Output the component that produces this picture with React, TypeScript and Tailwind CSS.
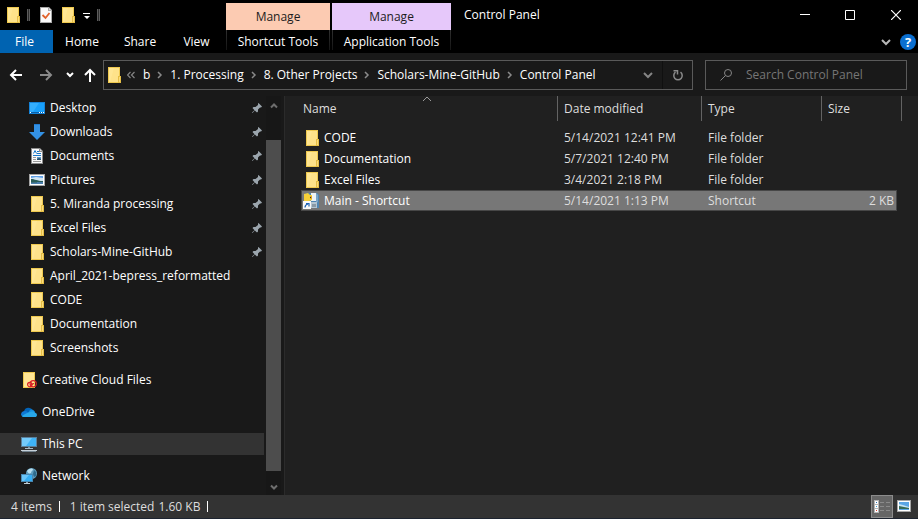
import React from 'react';

type IconProps = { className?: string };

function Folder({ className = '' }: IconProps) {
  return (
    <svg className={`h-4 w-4 shrink-0 ${className}`} viewBox="0 0 16 16" aria-hidden="true">
      <path d="M2 0h12v16H2z" fill="#efc94f" />
      <path d="M3 1h10v14H3z" fill="#ffe694" />
      <path d="M8 1h5v14H4z" fill="#fee28a" />
      <path d="M12 9h3v7h-3z" fill="#e5bd45" />
      <path d="M13 10h1v5h-1z" fill="#fbdc7c" />
    </svg>
  );
}

function Desktop() {
  return (
    <svg className="h-4 w-4 shrink-0" viewBox="0 0 16 16" aria-hidden="true">
      <path d="M0 2h16v12H0z" fill="#1583d8" />
      <path d="M1 3h14v9H1z" fill="#18a0fb" />
      <path d="M1 3h9L4 12H1z" fill="#33aefd" />
      <path d="M1 12h14v1H1z" fill="#0a5fa8" />
      <path d="M1 12h1v1H1zM10 12h1v1h-1zM12 12h1v1h-1zM14 12h1v1h-1z" fill="#fff" />
    </svg>
  );
}

function Downloads() {
  return (
    <svg className="h-4 w-4 shrink-0" viewBox="0 0 16 16" aria-hidden="true">
      <path d="M5 0h6v8h5l-8 8-8-8h5z" fill="#3391e4" />
      <path d="M5 0h6v1H5z" fill="#1f7ad0" />
    </svg>
  );
}

function Documents() {
  return (
    <svg className="h-4 w-4 shrink-0" viewBox="0 0 16 16" aria-hidden="true">
      <path d="M2 0h9l3 3v13H2z" fill="#8c8c8c" />
      <path d="M3 1h7v3h3v11H3z" fill="#fafafa" />
      <path d="M11 1l2 2h-2z" fill="#ddd" />
      <path d="M4.500 5.500l1.500-3 1.500 3" stroke="#1979ca" fill="none" />
      <path d="M8 3h2v1H8zM8 5h4v1H8zM4 7h8v1H4z" fill="#1979ca" />
      <path d="M4 9h3v1H4zM4 11h3v1H4zM4 13h8v1H4z" fill="#9a9a9a" />
      <path d="M8 9h4v3H8z" fill="#5c9bc9" />
      <path d="M8 11l2-1 2 1v1H8z" fill="#28516b" />
    </svg>
  );
}

function Pictures() {
  return (
    <svg className="h-4 w-4 shrink-0" viewBox="0 0 16 16" aria-hidden="true">
      <path d="M0 2h16v12H0z" fill="#a4a4a4" />
      <path d="M1 3h14v10H1z" fill="#fff" />
      <path d="M2 4h12v8H2z" fill="#5f9fe6" />
      <path d="M2 6l5-1 7 1v3H2z" fill="#d3e7f4" />
      <path d="M2 7c4 0 6 2 12 2v1H2z" fill="#2b5e59" />
      <path d="M2 10h12v2H2z" fill="#4b7fae" />
      <path d="M2 10h6v1H2z" fill="#3d6f80" />
    </svg>
  );
}

function CreativeCloud() {
  return (
    <svg className="h-4 w-4 shrink-0" viewBox="0 0 16 16" aria-hidden="true">
      <path d="M2 0h12v16H2z" fill="#efc94f" />
      <path d="M3 1h10v14H3z" fill="#ffe694" />
      <g fill="none" stroke="#da1f26" strokeWidth="1.200">
        <circle cx="8.800" cy="12.600" r="2.200" />
        <circle cx="12.200" cy="11.800" r="3.100" />
        <path d="M9 12.600c2 1.600 2.200-1.600 4-.8" />
      </g>
    </svg>
  );
}

function OneDrive() {
  return (
    <svg className="h-4 w-4 shrink-0" viewBox="0 0 16 16" aria-hidden="true">
      <path d="M3 8c0-5 7-6 9-1l-4 5H3z" fill="#0364b8" />
      <path d="M3 13c-4 0-4-6 1-6 2 0 4 2 7 5z" fill="#0f78d4" />
      <path d="M7 9l2-3c2-1 4 0 5 2z" fill="#1490df" />
      <path d="M1 12c2-2 5-3 8-4 3-1 5 0 5.500 1 2.500 1 1.500 4-.5 4H3c-1 0-1.700-.4-2-1z" fill="#28a8ea" />
    </svg>
  );
}

function ThisPC() {
  return (
    <svg className="h-4 w-4 shrink-0" viewBox="0 0 16 16" aria-hidden="true">
      <path d="M0 1h16v10H0z" fill="#5b7f9a" />
      <path d="M1 2h14v8H1z" fill="#3fb4f7" />
      <path d="M1 2h10L5 10H1z" fill="#74cbfb" />
      <path d="M7 11h2v1H7z" fill="#77909f" />
      <path d="M4 12h8v1H4z" fill="#a9bac6" />
      <path d="M0 14h16v1H0z" fill="#c6d0d8" />
      <path d="M1 15h14v1H1z" fill="#71818d" />
    </svg>
  );
}

function Network() {
  return (
    <svg className="h-4 w-4 shrink-0" viewBox="0 0 16 16" aria-hidden="true">
      <circle cx="10.500" cy="5.500" r="5.500" fill="#5f9dbd" />
      <path d="M6 3c2-3 5-3 6-2 0 2-2 2-2 4-2 1-3 0-4-2z" fill="#b9deee" />
      <path d="M13 2l2 2v4l-2 1-1-3z" fill="#2e6b8c" />
      <path d="M0 6h12v8H0z" fill="#4888b2" />
      <path d="M1 7h10v6H1z" fill="#35adf2" />
      <path d="M1 7h7l-5 6H1z" fill="#69c5f8" />
      <path d="M5 14h2v1H5z" fill="#8ba2b2" />
      <path d="M3 15h6v1H3z" fill="#c2ced6" />
    </svg>
  );
}

function PythonShortcut() {
  return (
    <svg className="h-4 w-4 shrink-0" viewBox="0 0 16 16" aria-hidden="true">
      <path d="M3 0h11l2 2v13H3z" fill="#4f86b3" />
      <path d="M8 0h5v8H8z" fill="#eef3f6" />
      <path d="M13 0l2 2v7l-2 1z" fill="#7ba4c6" />
      <path d="M8 9h6v6H8z" fill="#b4c6d3" />
      <path d="M9 11h4v3H9z" fill="#8a9aa6" />
      <path d="M1 1l4-1 2 2h2v5L6 8H1z" fill="#f6cf38" />
      <path d="M7 3h2v3H7z" fill="#e6a91f" />
      <path d="M7 4h1v1H7z" fill="#333" />
      <path d="M0 8h8v8H0z" fill="#f8f8f8" />
      <path d="M2 14.500c0-2 1-3 3-3.500M3 10.500h3v3" fill="none" stroke="#1c62b5" strokeWidth="1.200" />
    </svg>
  );
}

function Pin() {
  return (
    <svg className="h-3 w-3 shrink-0" viewBox="0 0 12 12" aria-label="Pinned" role="img">
      <path d="M7.500 1L11 4.500l-1 1-1 0L7 7.500 7 9.500l-1 1L3.800 8.500 1.500 11 1 10.500 3.500 8.200 1.500 6l1-1h2l2.500-2V1.500z" fill="#9ba5ad" />
    </svg>
  );
}

function Stroke({ d, className, box = '0 0 14 14' }: { d: string; className: string; box?: string }) {
  return (
    <svg className={`shrink-0 ${className}`} viewBox={box} fill="none" stroke="currentColor" strokeWidth="2" aria-hidden="true">
      <path d={d} />
    </svg>
  );
}

function Separator() {
  return <span className="h-3 w-[3px] border-x border-[#5c5c5c] bg-[#2b2b2b]" />;
}

type Item = { label: string; icon: React.ReactNode; pinned?: boolean; selected?: boolean };

const quickAccess: Item[] = [
  { label: 'Desktop', icon: <Desktop />, pinned: true },
  { label: 'Downloads', icon: <Downloads />, pinned: true },
  { label: 'Documents', icon: <Documents />, pinned: true },
  { label: 'Pictures', icon: <Pictures />, pinned: true },
  { label: '5. Miranda processing', icon: <Folder />, pinned: true },
  { label: 'Excel Files', icon: <Folder />, pinned: true },
  { label: 'Scholars-Mine-GitHub', icon: <Folder />, pinned: true },
  { label: 'April_2021-bepress_reformatted', icon: <Folder /> },
  { label: 'CODE', icon: <Folder /> },
  { label: 'Documentation', icon: <Folder /> },
  { label: 'Screenshots', icon: <Folder /> },
];

const roots: Item[] = [
  { label: 'Creative Cloud Files', icon: <CreativeCloud /> },
  { label: 'OneDrive', icon: <OneDrive /> },
  { label: 'This PC', icon: <ThisPC />, selected: true },
  { label: 'Network', icon: <Network /> },
];

const files = [
  { name: 'CODE', date: '5/14/2021 12:41 PM', type: 'File folder', size: '' },
  { name: 'Documentation', date: '5/7/2021 12:40 PM', type: 'File folder', size: '' },
  { name: 'Excel Files', date: '3/4/2021 2:18 PM', type: 'File folder', size: '' },
  { name: 'Main - Shortcut', date: '5/14/2021 1:13 PM', type: 'Shortcut', size: '2 KB' },
];

const crumbs = ['b', '1. Processing', '8. Other Projects', 'Scholars-Mine-GitHub', 'Control Panel'];

function ContextTab({ group, color, width }: { group: string; color: string; width: string }) {
  return (
    <div className={`mr-0.5 flex shrink-0 flex-col pt-[3px] ${width}`}>
      <div className={`flex h-[27px] items-center justify-center text-[#1c1c1c] ${color}`}>Manage</div>
      <div className="flex h-[23px] items-start justify-between">
        <span className="h-5 w-px bg-linear-to-b from-[#303030] to-[#151515]" />
        <button className="h-full flex-1 whitespace-nowrap">{group}</button>
        <span className="h-5 w-px bg-linear-to-b from-[#303030] to-[#151515]" />
      </div>
    </div>
  );
}

function Header() {
  return (
    <header className="flex bg-black">
      <div className="w-[226px] shrink-0">
        <div className="flex h-[30px] items-center pl-[5px]">
          <Folder />
          <span className="ml-1.5 flex"><Separator /></span>
          <button aria-label="Properties" className="ml-[9px]">
            <svg className="h-4 w-4" viewBox="0 0 16 16">
              <path d="M1 0h9l3 3v13H1z" fill="#a9a9a9" />
              <path d="M2 1h7v3h3v11H2z" fill="#fafafa" />
              <path d="M10 1l2 2h-2z" fill="#ddd" />
              <path d="M3.500 8l3 3 4-5" fill="none" stroke="#e2622b" strokeWidth="1.800" />
            </svg>
          </button>
          <button aria-label="New folder" className="ml-[5px]"><Folder /></button>
          <button aria-label="Customize Quick Access Toolbar" className="ml-[7px] mt-px">
            <svg className="h-2 w-2" viewBox="0 0 8 8">
              <path d="M0 1h7v1H0zM1 4h6L4 7z" fill="#fff" />
            </svg>
          </button>
          <span className="ml-1.5 flex"><Separator /></span>
        </div>
        <nav className="flex h-[23px]">
          <button className="w-[53px] bg-[#0063b1] pr-1">File</button>
          <button className="w-[58px]">Home</button>
          <button className="w-[58px]">Share</button>
          <button className="w-[55px]">View</button>
        </nav>
      </div>
      <ContextTab group="Shortcut Tools" color="bg-[#fccbb2]" width="w-[104px]" />
      <ContextTab group="Application Tools" color="bg-[#e6c8fa]" width="w-[119px]" />
      <div className="min-w-0 flex-1">
        <div className="flex h-[30px] items-center">
          <h1 className="flex-1 pl-[11px]">Control Panel</h1>
          <button aria-label="Minimize" className="flex w-[45px] justify-center">
            <svg className="h-2.5 w-2.5" viewBox="0 0 10 10"><path d="M0 4h10v1H0z" fill="#fff" /></svg>
          </button>
          <button aria-label="Maximize" className="flex w-[46px] justify-center">
            <svg className="h-2.5 w-2.5" viewBox="0 0 10 10"><path d="M.5.5h9v9h-9z" fill="none" stroke="#fff" /></svg>
          </button>
          <button aria-label="Close" className="flex w-[45px] justify-center">
            <svg className="h-2.5 w-2.5" viewBox="0 0 10 10"><path d="M0 0l10 10M10 0L0 10" fill="none" stroke="#fff" strokeWidth="1.200" /></svg>
          </button>
        </div>
        <div className="flex h-[23px] items-center justify-end gap-[9px]">
          <button aria-label="Expand the Ribbon">
            <Stroke className="h-2.5 w-2.5 text-[#b8b8b8]" box="0 0 10 10" d="M1 3l4 4 4-4" />
          </button>
          <button aria-label="Help" className="mr-0.5 flex h-4 w-4 items-center justify-center rounded-full bg-[#0b6fd0] text-[13px] font-bold leading-4">?</button>
        </div>
      </div>
    </header>
  );
}

function AddressBar() {
  return (
    <div className="flex h-[43px] items-center pr-[11px] text-white">
      <div className="flex w-[103px] shrink-0 items-center pl-[9px]">
        <button aria-label="Back"><Stroke className="h-3.5 w-3.5" d="M13 7H2M7 2L2 7l5 5" /></button>
        <button aria-label="Forward" className="ml-[17px] text-[#8a8a8a]"><Stroke className="h-3.5 w-3.5" d="M0 7h11M6 2l5 5-5 5" /></button>
        <button aria-label="Recent locations" className="ml-3"><Stroke className="h-2 w-2" box="0 0 8 8" d="M1 2l3 3 3-3" /></button>
        <button aria-label="Up" className="ml-[9px]"><Stroke className="h-3.5 w-3.5" d="M7 14V2M2 7l5-5 5 5" /></button>
      </div>
      <div className="flex h-[30px] min-w-0 flex-1 items-center border border-[#5a5a5a]">
        <Folder className="ml-0.5" />
        <svg className="ml-[5px] h-2 w-2 shrink-0 text-[#858585]" viewBox="0 0 8 8" fill="none" stroke="currentColor" strokeWidth="1.200" aria-hidden="true">
          <path d="M3.500 1l-3 3 3 3M7.500 1l-3 3 3 3" />
        </svg>
        <ol className="ml-2 flex items-center">
          {crumbs.map((crumb, i) => (
            <li key={crumb} className="flex items-center">
              {i > 0 && (
                <span className="flex w-5 justify-center text-[#8a8a8a]">
                  <svg className="h-2 w-1.5" viewBox="0 0 6 8" fill="none" stroke="currentColor" strokeWidth="1.500" aria-hidden="true">
                    <path d="M1 1l3 3-3 3" />
                  </svg>
                </span>
              )}
              <button className="whitespace-nowrap">{crumb}</button>
            </li>
          ))}
        </ol>
        <button aria-label="Previous locations" className="ml-auto mr-[9px] text-[#858585]">
          <Stroke className="h-2.5 w-2.5" box="0 0 10 10" d="M1 3l4 4 4-4" />
        </button>
        <button aria-label="Refresh" className="flex h-full w-[30px] items-center justify-center border-l border-[#101010] text-[#8a8a8a]">
          <svg className="h-3 w-3" viewBox="0 0 12 12" fill="none" stroke="currentColor" strokeWidth="1.500">
            <path d="M8.500 3.200a4.200 4.200 0 1 1-5 0" />
            <path d="M1.500 1.800h4v3.700" />
          </svg>
        </button>
      </div>
      <label className="ml-3 flex h-[30px] w-[202px] shrink-0 items-center border border-[#5a5a5a] pl-3.5">
        <svg className="h-3 w-3 shrink-0 text-[#858585]" viewBox="0 0 12 12" fill="none" stroke="currentColor">
          <circle cx="8" cy="4" r="3.500" />
          <path d="M5.500 6.500L.5 11.500" />
        </svg>
        <input
          type="search"
          aria-label="Search Control Panel"
          placeholder="Search Control Panel"
          className="ml-3.5 min-w-0 flex-1 bg-transparent outline-none placeholder:text-[#767676]"
        />
      </label>
    </div>
  );
}

function SideRow({ item, indent }: { item: Item; indent: string }) {
  return (
    <li className="flex h-6 items-center">
      <a
        href="#"
        className={`flex h-[22px] flex-1 items-center whitespace-nowrap pr-px ${indent} ${item.selected ? 'bg-[#333333]' : ''}`}
      >
        {item.icon}
        <span className="ml-[5px] flex-1">{item.label}</span>
        {item.pinned && <Pin />}
      </a>
    </li>
  );
}

function Sidebar() {
  return (
    <aside className="flex w-[285px] shrink-0 border-r border-[#2b2b2b]">
      <nav className="w-[264px] pb-[7px]">
        <ul>
          {quickAccess.map((item) => <SideRow key={item.label} item={item} indent="pl-[29px]" />)}
        </ul>
        <ul className="mt-2 flex flex-col gap-2">
          {roots.map((item) => <SideRow key={item.label} item={item} indent="pl-[21px]" />)}
        </ul>
      </nav>
      <div className="ml-0.5 flex w-[15px] flex-col items-center bg-[#171717] text-[#6e6e6e]">
        <span className="flex h-11 pt-1.5"><Stroke className="h-2 w-2" box="0 0 8 8" d="M1 5.500l3-3 3 3" /></span>
        <span className="w-full flex-1 bg-[#4d4d4d]" />
        <span className="flex h-6 items-center pb-1 pt-3"><Stroke className="h-2 w-2" box="0 0 8 8" d="M1 2.500l3 3 3-3" /></span>
      </div>
    </aside>
  );
}

function FileList() {
  const head = 'border-r border-[#636363] p-0 text-left font-normal';
  return (
    <main className="min-w-0 flex-1 bg-[#202020] text-[#dedede]">
      <table className="ml-4 w-[601px] table-fixed border-separate border-spacing-0">
        <colgroup>
          <col className="w-[257px]" />
          <col className="w-36" />
          <col className="w-[120px]" />
          <col className="w-[75px]" />
          <col className="w-[5px]" />
        </colgroup>
        <thead>
          <tr className="h-[25px]">
            <th className={`${head} relative pl-0.5`}>
              Name
              <svg className="absolute left-[121px] top-0 h-1.5 w-2.5 text-[#9a9a9a]" viewBox="0 0 10 6" fill="none" stroke="currentColor" aria-hidden="true">
                <path d="M1 5l4-4 4 4" />
              </svg>
            </th>
            <th className={`${head} pl-1.5`}>Date modified</th>
            <th className={`${head} pl-1.5`}>Type</th>
            <th className={`${head} pl-1.5`} colSpan={2}>Size</th>
          </tr>
        </thead>
        <tbody>
          <tr className="h-1.5"><td colSpan={5} className="p-0" /></tr>
          {files.map((file) => {
            const selected = file.size !== '';
            const cell = selected ? 'border-y border-[#474747] bg-[#777777] p-0' : 'p-0';
            return (
              <tr key={file.name} aria-selected={selected} className="h-[21px] leading-4">
                <td className={`${cell} ${selected ? 'border-l pl-px' : 'pl-[3px]'} text-white`}>
                  <span className="flex items-center">
                    {selected ? <PythonShortcut /> : <Folder />}
                    <span className={selected ? 'ml-[5px]' : 'ml-1'}>{file.name}</span>
                  </span>
                </td>
                <td className={`${cell} pl-1.5`}>{file.date}</td>
                <td className={`${cell} pl-1.5`}>{file.type}</td>
                <td className={`${cell} ${selected ? 'border-r' : ''} pr-0.5 text-right`}>{file.size}</td>
                <td className="p-0" />
              </tr>
            );
          })}
        </tbody>
      </table>
    </main>
  );
}

function StatusBar() {
  return (
    <footer className="flex h-6 items-center border-b border-[#1d2430] bg-[#333333] pl-[11px] text-[#dedede]">
      <span>4 items</span>
      <span className="ml-[7px] h-[11px] w-px bg-white" />
      <span className="ml-2.5">1 item selected</span>
      <span className="ml-1">1.60 KB</span>
      <span className="ml-[7px] h-[11px] w-px bg-white" />
      <button aria-label="Details view" className="ml-auto flex h-[23px] w-[22px] items-center justify-center border border-[#8c8c8c] bg-[#666666]">
        <svg className="h-3.5 w-4" viewBox="0 0 16 14">
          <path d="M0 0h5v13H0z" fill="#b5b5b5" />
          <path d="M1 1h3v3H1zM1 5h3v3H1zM1 9h3v3H1z" fill="#fff" />
          <path d="M2 2h1v1H2z" fill="#276fb5" />
          <path d="M2 6h1v1H2z" fill="#2f9ddd" />
          <path d="M2 10h1v1H2z" fill="#d83a2d" />
          <path d="M6 2h4v1H6zM12 2h4v1h-4zM6 6h4v1H6zM12 6h4v1h-4zM6 10h4v1H6zM12 10h4v1h-4z" fill="#8b8b8b" />
        </svg>
      </button>
      <button aria-label="Large icons view" className="ml-1 mr-[7px] flex h-5 w-3.5 items-center justify-center pb-0.5">
        <svg className="h-3 w-3.5" viewBox="0 0 14 12">
          <path d="M0 0h14v12H0z" fill="#a5a5a5" />
          <path d="M1 1h12v10H1z" fill="#fff" />
          <path d="M2 2h10v8H2z" fill="#5aa5e5" />
          <path d="M2 4l4 1 6 2v1H2z" fill="#c5e3f4" />
          <path d="M2 6l5 1 5 1v1H2z" fill="#376a55" />
        </svg>
      </button>
    </footer>
  );
}

export default function App() {
  return (
    <div className="flex min-h-screen min-w-[918px] flex-col bg-[#191919] font-['Open_Sans','Noto_Sans',sans-serif] text-xs text-white">
      <Header />
      <AddressBar />
      <div className="flex flex-1">
        <Sidebar />
        <FileList />
      </div>
      <StatusBar />
    </div>
  );
}
